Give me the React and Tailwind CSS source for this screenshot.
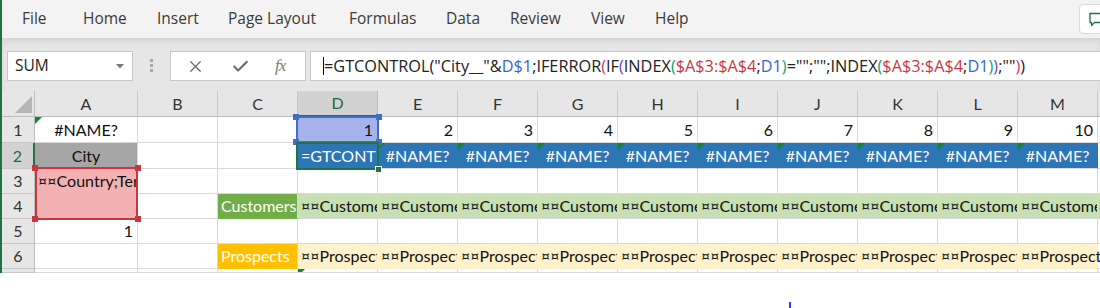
import { X, Check } from "lucide-react";

const COLS = ["A", "B", "C", "D", "E", "F", "G", "H", "I", "J", "K", "L", "M", "N"];
const ROW_H = ["h-[26px]", "h-[26px]", "h-[25px]", "h-[25px]", "h-[25px]", "h-[25px]", "h-[4px]"];

const TABS = [
  ["File", "w-[61px]"],
  ["Home", "w-[74px]"],
  ["Insert", "w-[71px]"],
  ["Page Layout", "w-[121px]"],
  ["Formulas", "w-[97px]"],
  ["Data", "w-[64px]"],
  ["Review", "w-[81px]"],
  ["View", "w-[64px]"],
  ["Help", "w-[64px]"],
];

const BLUE = "bg-[#2e75b6] border-r-[#2e75b6] text-white";
const PINK = "bg-[#f4b1b3] border-[#f4b1b3]";
const GREEN = "bg-[#70ad47] border-b-[#70ad47] text-white";
const LGREEN = "bg-[#c6e0b4] border-[#c6e0b4]";
const ORANGE = "bg-[#ffc000] border-b-[#ffc000] text-white";
const YELLOW = "bg-[#fff2cc] border-[#fff2cc]";

function cellFor(r, c) {
  const i = COLS.indexOf(c);
  const inDM = i >= 3 && i <= 12;
  if (r === 0) {
    if (c === "A") return { t: "#NAME?", al: "center", tri: true };
    if (c === "D") return { t: "1", al: "right", fill: "bg-[#a4b3ec]" };
    if (inDM) return { t: String(i - 2), al: "right" };
  }
  if (r === 1) {
    if (c === "A") return { t: "City", al: "center", fill: "bg-[#a6a6a6]" };
    if (c === "D") return { t: '=GTCONTROL("City__"&D$1', al: "left", fill: BLUE };
    if (inDM) return { t: "#NAME?", al: "center", fill: BLUE, tri: true };
  }
  if (r === 2 && c === "A") return { t: "¤¤Country;Territory", al: "left", fill: PINK };
  if (r === 3) {
    if (c === "A") return { fill: PINK };
    if (c === "C") return { t: "Customers", al: "left", fill: GREEN };
    if (i >= 3) return { t: "¤¤Customers", al: "left", fill: LGREEN };
  }
  if (r === 4 && c === "A") return { t: "1", al: "right" };
  if (r === 5) {
    if (c === "C") return { t: "Prospects", al: "left", fill: ORANGE };
    if (c === "M") return { t: "¤¤Prospects", al: "left", fill: YELLOW, spill: true };
    if (inDM) return { t: "¤¤Prospects", al: "left", fill: YELLOW };
  }
  if (r === 6 && c === "D") return { tri: true };
  return {};
}

function Triangle() {
  return (
    <svg className="absolute left-0 top-0" width="7" height="7" viewBox="0 0 7 7">
      <polygon points="0,0 7,0 0,7" fill="#13862f" />
    </svg>
  );
}

function Cell({ c, r }) {
  const d = cellFor(r, c);
  const w = c === "A" ? "w-[103px]" : "w-[80px]";
  const align =
    d.al === "right" ? "justify-end pr-[4px]" : d.al === "center" ? "justify-center" : "justify-start pl-[3px]";
  return (
    <div
      className={`relative shrink-0 ${w} ${ROW_H[r]} flex items-center ${align} border-r border-b border-[#d9d9d9] whitespace-nowrap ${
        d.spill ? "overflow-visible" : "overflow-hidden"
      } ${d.fill || ""}`}
    >
      {d.tri && <Triangle />}
      {d.t}
    </div>
  );
}

function Handle({ className }) {
  return <div className={`absolute w-[6px] h-[6px] ${className}`} />;
}

export default function App() {
  return (
    <div className="relative w-[1100px] h-[308px] overflow-hidden bg-white font-['Lato',sans-serif] text-[16px] text-[#111]">
      <div className="border-l-2 border-[#217346]">
        {/* ribbon tabs */}
        <div className="h-[38px] bg-[#f3f3f3] flex items-center pl-[20px] font-['Open_Sans',sans-serif] text-[15.5px] text-[#3b3b3b]">
          {TABS.map(([t, w]) => (
            <span key={t} className={`${w} shrink-0`}>
              {t}
            </span>
          ))}
        </div>

        {/* formula bar */}
        <div className="h-[53px] bg-[#e6e6e6] shadow-[inset_0_4px_5px_rgba(0,0,0,0.07)] flex items-start pt-[13px] font-['Open_Sans',sans-serif]">
          <div className="shrink-0 ml-[5px] w-[126px] h-[30px] bg-white border border-[#c6c6c6] flex items-center justify-between pl-[7px] pr-[8px] text-[15.5px] text-[#222]">
            <span>SUM</span>
            <svg width="8" height="5" viewBox="0 0 8 5">
              <polygon points="0,0 8,0 4,4.5" fill="#7a7a7a" />
            </svg>
          </div>
          <div className="shrink-0 ml-[17px] mt-[8px] flex flex-col gap-[2px]">
            <div className="w-[3px] h-[3px] bg-[#a8a8a8]" />
            <div className="w-[3px] h-[3px] bg-[#a8a8a8]" />
            <div className="w-[3px] h-[3px] bg-[#a8a8a8]" />
          </div>
          <div className="shrink-0 ml-[17px] w-[136px] h-[30px] bg-white border border-[#c6c6c6] flex items-center pl-[15px] text-[#6a6a6a]">
            <X size={19} strokeWidth={1.6} />
            <Check size={19} strokeWidth={2.6} className="ml-[26px]" />
            <span className="ml-[25px] font-['Liberation_Serif',serif] italic text-[17px] tracking-[-1px] text-[#7a7a7a]">
              fx
            </span>
          </div>
          <div className="shrink-0 ml-[4px] w-[820px] h-[30px] bg-white border border-[#c6c6c6] flex items-center pl-[12px] text-[16.3px] text-[#222] whitespace-nowrap">
            <span className="w-[1px] h-[18px] bg-black" />
            <span>
              =GTCONTROL("City__"&amp;
              <span className="text-[#3366cc]">D$1</span>;IFERROR<span className="text-[#d8336f]">(</span>IF
              <span className="text-[#7b3fb5]">(</span>INDEX<span className="text-[#12a06e]">(</span>
              <span className="text-[#c8373f]">$A$3:$A$4</span>;<span className="text-[#3366cc]">D1</span>
              <span className="text-[#12a06e]">)</span>="";"";INDEX<span className="text-[#12a06e]">(</span>
              <span className="text-[#c8373f]">$A$3:$A$4</span>;<span className="text-[#3366cc]">D1</span>
              <span className="text-[#12a06e]">)</span>
              <span className="text-[#7b3fb5]">)</span>;""<span className="text-[#d8336f]">)</span>)
            </span>
          </div>
        </div>

        {/* column headers */}
        <div className="flex h-[26px]">
          <div className="relative shrink-0 w-[33px] h-[26px] bg-[#e6e6e6] border-r border-b border-[#bdbdbd]">
            <svg className="absolute right-[2px] bottom-[3px]" width="17" height="17" viewBox="0 0 17 17">
              <polygon points="17,0 17,17 0,17" fill="#b5b5b5" />
            </svg>
          </div>
          {COLS.map((c) => (
            <div
              key={c}
              className={`shrink-0 ${c === "A" ? "w-[103px]" : "w-[80px]"} h-[26px] flex items-center justify-center border-r ${
                c === "D"
                  ? "bg-[#d2d2d2] border-r-[#bdbdbd] border-b-2 border-b-[#217346] text-[#1e6b3c]"
                  : "bg-[#e6e6e6] border-b border-[#bdbdbd] border-r-[#c8c8c8] text-[#333]"
              }`}
            >
              {c}
            </div>
          ))}
        </div>

        {/* rows */}
        {ROW_H.map((h, r) => (
          <div key={r} className="flex">
            <div
              className={`shrink-0 w-[33px] ${h} flex items-center justify-center border-b border-[#c8c8c8] ${
                r === 1
                  ? "bg-[#d2d2d2] border-r-2 border-r-[#217346] text-[#1e6b3c]"
                  : "bg-[#e6e6e6] border-r border-r-[#bdbdbd] text-[#333]"
              }`}
            >
              {r < 6 ? r + 1 : ""}
            </div>
            {COLS.map((c) => (
              <Cell key={c} c={c} r={r} />
            ))}
          </div>
        ))}
      </div>

      {/* D1 reference highlight */}
      <div className="absolute left-[296px] top-[116px] w-[83px] h-[27px] border-2 border-[#3f6fc6]" />
      <Handle className="left-[293px] top-[114px] bg-[#3f6fc6]" />
      <Handle className="left-[376px] top-[114px] bg-[#3f6fc6]" />
      <Handle className="left-[293px] top-[139px] bg-[#3f6fc6]" />
      <Handle className="left-[376px] top-[139px] bg-[#3f6fc6]" />

      {/* active cell D2 */}
      <div className="absolute left-[296px] top-[142px] w-[83px] h-[28px] border-2 border-[#217346]" />
      <div className="absolute left-[375px] top-[166px] w-[7px] h-[7px] bg-[#217346] border border-white" />

      {/* A3:A4 reference highlight */}
      <div className="absolute left-[35px] top-[167px] w-[103px] h-[53px] border-2 border-[#c8373f]" />
      <Handle className="left-[32px] top-[165px] bg-[#c8373f]" />
      <Handle className="left-[135px] top-[165px] bg-[#c8373f]" />
      <Handle className="left-[32px] top-[216px] bg-[#c8373f]" />
      <Handle className="left-[135px] top-[216px] bg-[#c8373f]" />

      {/* comments button */}
      <div className="absolute left-[1079px] top-[4px] w-[40px] h-[30px] bg-white border border-[#dadada] rounded-[4px] flex items-center pl-[9px]">
        <svg width="16" height="15" viewBox="0 0 16 15" fill="none">
          <path d="M1 1.5h14v9H5.5L2.5 13.5v-3H1z" stroke="#217346" strokeWidth="1.3" strokeLinejoin="round" />
        </svg>
      </div>

      <div className="absolute left-[789px] top-[302px] w-[2px] h-[6px] bg-[#2b3bf5]" />
    </div>
  );
}
